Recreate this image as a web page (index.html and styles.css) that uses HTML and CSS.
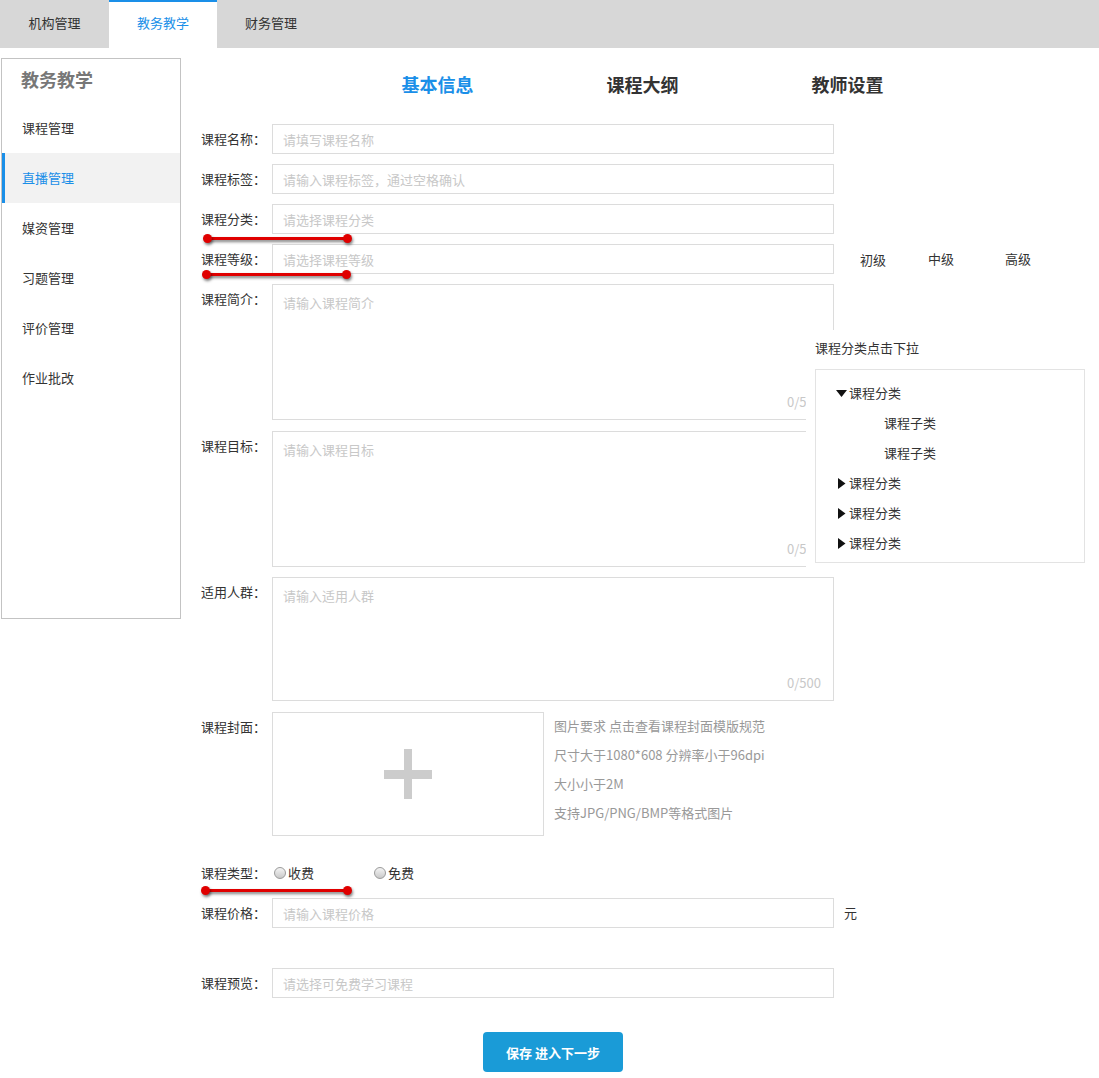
FILE: index.html
```html
<!DOCTYPE html>
<html lang="zh-CN">
<head>
<meta charset="utf-8">
<title>教务教学</title>
<link rel="stylesheet" href="styles.css">
</head>
<body>
<div class="page">
  <header class="topbar">
    <a class="tab">机构管理</a>
    <a class="tab active">教务教学</a>
    <a class="tab">财务管理</a>
  </header>
  <div class="main">
    <aside class="sidebar">
      <div class="side-title">教务教学</div>
      <ul class="side-menu">
        <li>课程管理</li>
        <li class="active">直播管理</li>
        <li>媒资管理</li>
        <li>习题管理</li>
        <li>评价管理</li>
        <li>作业批改</li>
      </ul>
    </aside>
    <section class="content">
      <nav class="steps">
        <span class="step active">基本信息</span>
        <span class="step">课程大纲</span>
        <span class="step">教师设置</span>
      </nav>
      <form class="form">
        <div class="row">
          <label class="label">课程名称：</label>
          <input class="input" placeholder="请填写课程名称">
        </div>
        <div class="row">
          <label class="label">课程标签：</label>
          <input class="input" placeholder="请输入课程标签，通过空格确认">
        </div>
        <div class="row">
          <label class="label">课程分类：</label>
          <input class="input" placeholder="请选择课程分类">
        </div>
        <div class="row">
          <label class="label">课程等级：</label>
          <input class="input" placeholder="请选择课程等级">
          <div class="levels">
            <span class="level low">初级</span>
            <span class="level mid">中级</span>
            <span class="level high">高级</span>
          </div>
        </div>
        <div class="row gap11">
          <label class="label">课程简介：</label>
          <div class="area tall">
            <span class="ph">请输入课程简介</span>
            <span class="count">0/500</span>
          </div>
        </div>
        <div class="row">
          <label class="label">课程目标：</label>
          <div class="area tall">
            <span class="ph">请输入课程目标</span>
            <span class="count">0/500</span>
          </div>
        </div>
        <div class="row gap11">
          <label class="label">适用人群：</label>
          <div class="area">
            <span class="ph">请输入适用人群</span>
            <span class="count">0/500</span>
          </div>
        </div>
        <div class="row cover-row">
          <label class="label">课程封面：</label>
          <div class="cover"><span class="plus"></span></div>
          <ul class="hints">
            <li>图片要求 点击查看课程封面模版规范</li>
            <li>尺寸大于1080*608 分辨率小于96dpi</li>
            <li>大小小于2M</li>
            <li>支持JPG/PNG/BMP等格式图片</li>
          </ul>
        </div>
        <div class="row type-row">
          <label class="label short">课程类型：</label>
          <span class="radio-opt"><span class="radio"></span>收费</span>
          <span class="radio-opt"><span class="radio"></span>免费</span>
        </div>
        <div class="row price-row">
          <label class="label">课程价格：</label>
          <input class="input" placeholder="请输入课程价格">
          <span class="unit">元</span>
        </div>
        <div class="row">
          <label class="label">课程预览：</label>
          <input class="input" placeholder="请选择可免费学习课程">
        </div>
        <div class="actions">
          <button type="button" class="btn">保存 进入下一步</button>
        </div>
      </form>
    </section>
  </div>

  <div class="dropdown">
    <div class="dd-title">课程分类点击下拉</div>
    <ul class="tree">
      <li class="node open"><svg class="tri" width="11" height="7" viewBox="0 0 11 7"><path d="M0 0H11L5.5 7Z" fill="#111"/></svg>课程分类</li>
      <li class="sub">课程子类</li>
      <li class="sub">课程子类</li>
      <li class="node"><svg class="tri r" width="8" height="11" viewBox="0 0 8 11"><path d="M0 0L7.5 5.5L0 11Z" fill="#111"/></svg>课程分类</li>
      <li class="node"><svg class="tri r" width="8" height="11" viewBox="0 0 8 11"><path d="M0 0L7.5 5.5L0 11Z" fill="#111"/></svg>课程分类</li>
      <li class="node"><svg class="tri r" width="8" height="11" viewBox="0 0 8 11"><path d="M0 0L7.5 5.5L0 11Z" fill="#111"/></svg>课程分类</li>
    </ul>
  </div>

  <div class="mark m1"></div>
  <div class="mark m2"></div>
  <div class="mark m3"></div>
</div>
</body>
</html>
```
FILE: styles.css
```css
* { box-sizing: border-box; }
body {
  margin: 0;
  font-family: "Noto Sans CJK SC", "Microsoft YaHei", "Liberation Sans", sans-serif;
  font-size: 13px;
  color: #333;
  background: #fff;
}
ul { margin: 0; padding: 0; list-style: none; }
.page { position: relative; width: 1099px; min-height: 1078px; }

.topbar { display: flex; height: 48px; background: #d7d7d7; }
.tab {
  width: 108px; height: 48px; line-height: 46px; text-align: center;
  color: #333; font-size: 13px;
}
.tab:first-child { width: 109px; }
.tab.active { background: #fff; color: #1a8fe8; border-top: 2px solid #1a8fe8; line-height: 42px; }

.main { display: flex; padding-top: 10px; align-items: flex-start; }
.sidebar {
  margin-left: 1px; width: 180px; height: 561px;
  border: 1px solid #c3c3c3;
}
.side-title {
  height: 44px; line-height: 40px; padding-left: 19px;
  font-size: 18px; font-weight: bold; color: #777;
}
.side-menu li {
  height: 50px; line-height: 50px; padding-left: 20px; color: #333;
}
.side-menu li.active { background: #f2f2f2; color: #1a8fe8; border-left: 3px solid #1a8fe8; padding-left: 17px; }

.content { flex: 1; padding-top: 11px; }
.steps { display: flex; padding-left: 154px; height: 30px; margin-bottom: 25px; }
.step { width: 205px; text-align: center; line-height: 30px; font-size: 18px; font-weight: bold; color: #333; }
.step.active { color: #1a8fe8; }

.form { padding-left: 20px; }
.row { display: flex; align-items: flex-start; margin-bottom: 10px; }
.row.gap11 { margin-bottom: 11px; }
.label { width: 71px; line-height: 30px; color: #333; white-space: nowrap; }
.input {
  width: 562px; height: 30px; border: 1px solid #dcdcdc; padding: 0 10px;
  font: inherit; font-size: 13px; color: #333; outline: none;
}
.input::placeholder { color: #c8c8c8; }

.levels { display: flex; margin-left: 26px; height: 30px; }
.level { line-height: 30px; }
.level.low { margin-top: 2px; line-height: 28px; }
.level.mid { margin-left: 42px; }
.level.high { margin-left: 51px; }

.area {
  width: 562px; height: 136px; border: 1px solid #dcdcdc;
  display: flex; flex-direction: column; padding: 7px 12px 6px 10px;
}
.area:not(.tall) { height: 124px; }
.ph { color: #c8c8c8; line-height: 22px; }
.count { margin-top: auto; align-self: flex-end; color: #c8c8c8; line-height: 22px; }

.cover-row { margin-bottom: 22px; }
.cover {
  width: 272px; height: 124px; border: 1px solid #dcdcdc;
  display: flex; align-items: center; justify-content: center;
}
.plus { position: relative; width: 48px; height: 50px; }
.plus::before, .plus::after { content: ""; position: absolute; background: #cccccc; }
.plus::before { left: 0; right: 0; top: 21px; height: 9px; }
.plus::after { top: 0; bottom: 0; left: 20px; width: 8px; }
.hints { margin-left: 10px; color: #999; line-height: 29px; margin-top: -1px; }

.type-row { align-items: center; height: 30px; }
.type-row .label { width: 73px; }
.radio-opt { display: inline-flex; align-items: center; line-height: 30px; width: 100px; }
.radio {
  display: inline-block; width: 12px; height: 12px; border-radius: 50%;
  border: 1px solid #9a9a9a; margin-right: 2px;
  background: linear-gradient(#f4f4f4, #c9c9c9);
}

.price-row { margin-bottom: 40px; }
.unit { margin-left: 10px; line-height: 30px; }

.actions { display: flex; justify-content: center; width: 633px; padding-left: 71px; margin-top: 34px; }
.btn {
  width: 140px; height: 40px; border: none; border-radius: 4px;
  background: #1a9bd7; color: #fff; font: inherit; font-size: 13px; font-weight: bold;
}

.dropdown {
  position: absolute; left: 806px; top: 330px; width: 293px; height: 237px;
  background: #fff; padding: 8px 0 0 9px;
}
.dd-title { line-height: 20px; color: #333; }
.tree {
  margin-top: 11px; width: 270px; height: 194px; border: 1px solid #e3e3e3;
  padding-top: 8px;
}
.tree li { height: 30px; line-height: 30px; display: flex; align-items: center; }
.tree .node { padding-left: 20px; }
.tree .node .tri { margin-right: 2px; }
.tree .node .tri.r { margin-left: 2px; margin-right: 3px; }
.tree .sub { padding-left: 68px; }

.mark {
  position: absolute; height: 3px; background: #e00000;
  box-shadow: 1px 2px 3px rgba(0,0,0,0.5); border-radius: 2px;
}
.mark::before, .mark::after {
  content: ""; position: absolute; top: -3px; width: 9px; height: 9px;
  border-radius: 50%; background: #e00000; box-shadow: 1px 2px 3px rgba(0,0,0,0.5);
}
.mark::before { left: -4px; }
.mark::after { right: -4px; }
.m1 { left: 207px; top: 237px; width: 141px; }
.m2 { left: 206px; top: 273px; width: 141px; }
.m3 { left: 205px; top: 889px; width: 143px; }
```
